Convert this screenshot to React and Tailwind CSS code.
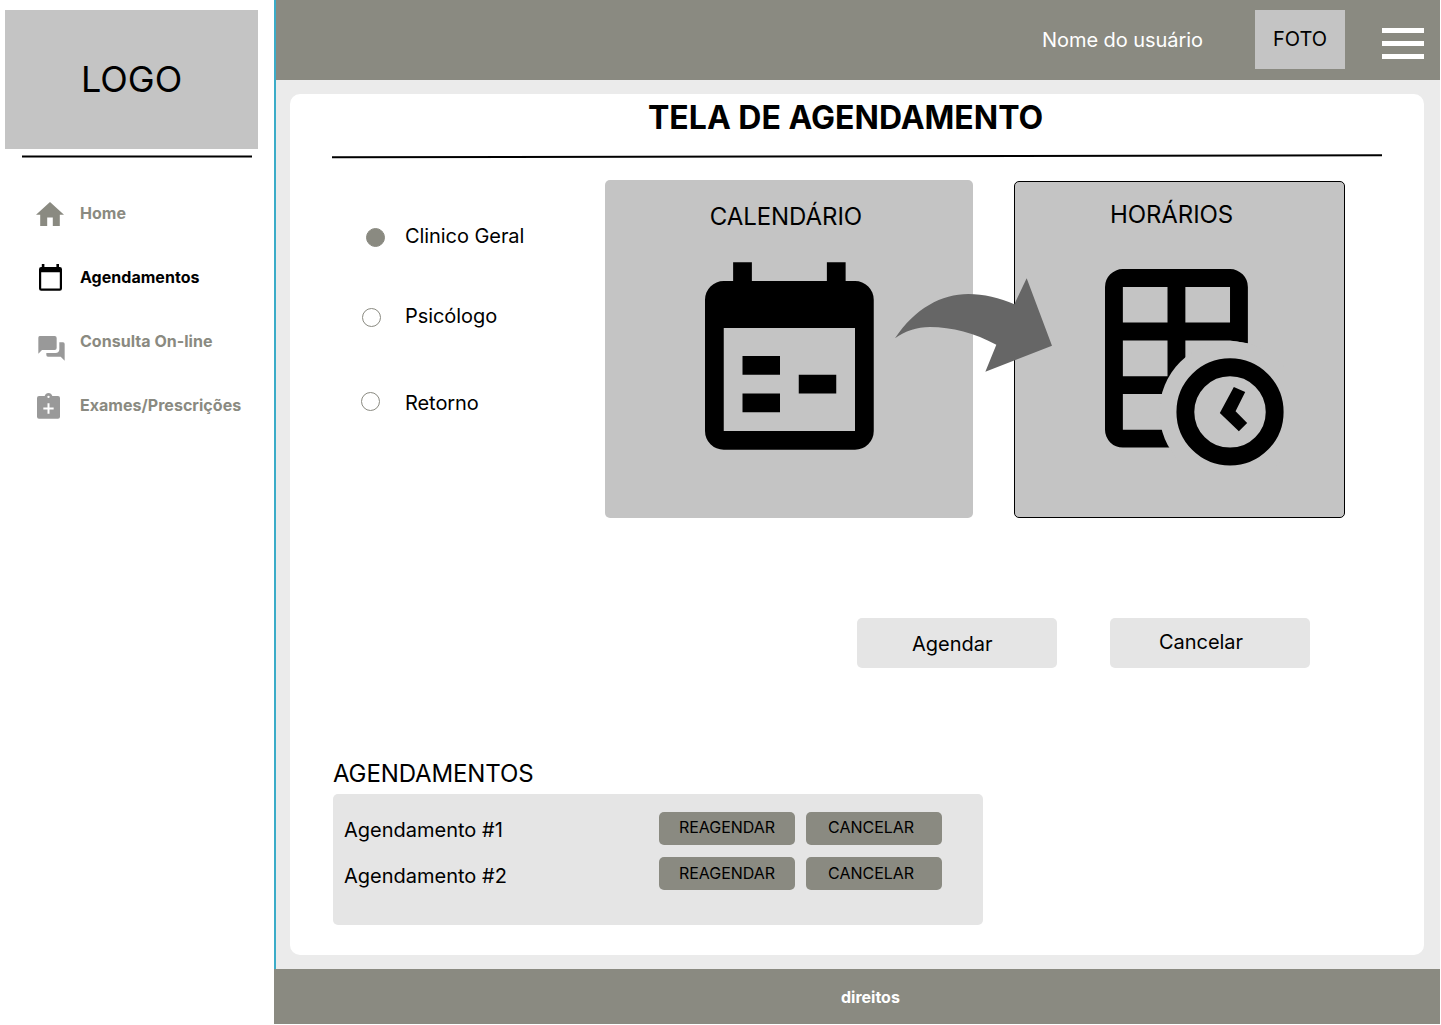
import React from "react";

const HomeIcon = () => (
  <svg width="28" height="24" viewBox="2 3 20 17" preserveAspectRatio="none" fill="#8a8a81">
    <path d="M10 20v-6h4v6h5v-8h3L12 3 2 12h3v8z" />
  </svg>
);

const CalendarIcon = () => (
  <svg width="23" height="27" viewBox="0 0 23 27" fill="#000">
    <path
      fillRule="evenodd"
      d="M2.8 0H5.4V3H17.4V0H20V3H20.8A2.2 2.2 0 0 1 23 5.2V24.6A2.2 2.2 0 0 1 20.8 26.8H2.2A2.2 2.2 0 0 1 0 24.6V5.2A2.2 2.2 0 0 1 2.200 3H2.8ZM2.200 8.200V24.500H20.800V8.200Z"
    />
  </svg>
);

const ForumIcon = () => (
  <svg width="27" height="25" viewBox="0 0 81 75" fill="#999">
    <path d="M5 0H50Q56 0 56 6V36Q56 42 50 42H12L1 53V5Q1 0 5 0Z" />
    <path d="M64 19H75Q80 19 80 24V74L68 62H30Q25 62 25 57V51H52Q64 51 64 40Z" />
  </svg>
);

const ClipboardIcon = () => (
  <svg width="23" height="26" viewBox="0 0 69 78" fill="#999">
    <path
      fillRule="evenodd"
      d="M6 9H23Q26 0 34.500 0Q43 0 46 9H63Q69 9 69 15V71Q69 77 63 77H6Q0 77 0 71V15Q0 9 6 9ZM34.500 8A3.500 3.500 0 1 0 34.500 15A3.500 3.500 0 1 0 34.500 8ZM31.500 31V43.500H19V49.500H31.500V62H37.500V49.500H50V43.500H37.500V31Z"
    />
  </svg>
);

const navItems = [
  { label: "Home", Icon: HomeIcon, box: "pl-[36px] pt-[9px]", color: "text-[#8a8a81]" },
  { label: "Agendamentos", Icon: CalendarIcon, box: "pl-[39px] pt-[7px]", color: "text-black" },
  { label: "Consulta On-line", Icon: ForumIcon, box: "pl-[38px] pt-[14.500px]", color: "text-[#8a8a81]" },
  { label: "Exames/Prescrições", Icon: ClipboardIcon, box: "pl-[36.500px] pt-[7.500px]", color: "text-[#8a8a81]" },
];

function Sidebar() {
  return (
    <aside className="w-[274px] shrink-0 bg-white">
      <div className="ml-[5px] mt-[10px] flex h-[139px] w-[253px] items-start bg-[#c4c4c4] pl-[76px] pt-[47px] text-[36px] leading-[44px]">
        LOGO
      </div>
      <svg className="ml-[22px] mt-[5px] block" width="230" height="4">
        <path d="M0 2.500H230" stroke="#000" strokeWidth="2" />
      </svg>
      <nav className="mt-[35px] flex flex-col">
        {navItems.map(({ label, Icon, box, color }) => (
          <a key={label} className={`flex h-16 items-start ${color}`}>
            <span className={`w-20 shrink-0 ${box}`}>
              <Icon />
            </span>
            <span className="whitespace-nowrap pt-[11px] text-base font-bold leading-[19px] tracking-[0.03px]">{label}</span>
          </a>
        ))}
      </nav>
    </aside>
  );
}

function Header() {
  return (
    <header className="flex h-20 items-start bg-[#8a8a81]">
      <span className="ml-[766px] mt-[28px] w-[213px] text-xl leading-6 tracking-[-0.06px] text-white">Nome do usuário</span>
      <div className="mt-[10px] h-[59px] w-[90px] bg-[#c4c4c4] pl-[18px] pt-[17px] text-xl leading-6">FOTO</div>
      <div className="ml-[37px] mt-[28px] flex w-[42px] flex-col gap-2">
        <span className="h-[5px] bg-white" />
        <span className="h-[5px] bg-white" />
        <span className="h-[5px] bg-white" />
      </div>
    </header>
  );
}

const options = [
  { label: "Clinico Geral", row: "h-20", dot: "ml-[4px] mt-[3.500px] bg-[#8a8a81] border-[#8a8a81]" },
  { label: "Psicólogo", row: "h-[87px]", dot: "ml-0 mt-[4px] border-[#8a8a81]" },
  { label: "Retorno", row: "h-6", dot: "ml-[-1px] mt-[1px] border-[#8a8a81]" },
];

function Specialties() {
  return (
    <div className="w-[243px] pt-[44px]">
      {options.map((o) => (
        <div key={o.label} className={`flex items-start ${o.row}`}>
          <span className="w-[43px] shrink-0">
            <span className={`block h-[19px] w-[19px] rounded-full border ${o.dot}`} />
          </span>
          <span className="text-xl leading-6 tracking-[-0.07px]">{o.label}</span>
        </div>
      ))}
    </div>
  );
}

function CalendarCard() {
  return (
    <div className="h-[338px] w-[368px] rounded-[5px] bg-[#c4c4c4] pl-[99.700px] pt-[22px]">
      <h2 className="pl-[5px] text-2xl leading-[29px] tracking-[-0.06px]">CALENDÁRIO</h2>
      <svg className="mt-[31px]" width="169.500" height="188" viewBox="3 1 18.080 20" fill="#000">
        <path
          fillRule="evenodd"
          d="M6 1H8V3H16V1H18V3H19A2 2 0 0 1 21 5V19A2 2 0 0 1 19 21H5A2 2 0 0 1 3 19V5A2 2 0 0 1 5 3H6ZM5 8V19H19V8Z"
        />
        <path d="M7 11h4v2H7zM13 13h4v2h-4zM7 15h4v2H7z" />
      </svg>
    </div>
  );
}

function HoursCard() {
  return (
    <div className="ml-[41px] mt-px h-[337px] w-[331px] rounded-[5px] border border-black bg-[#c4c4c4] pl-[90px] pt-[18px]">
      <h2 className="pl-[5px] text-2xl leading-[29px] tracking-[-0.1px]">HORÁRIOS</h2>
      <svg className="mt-[40px]" width="178.600" height="196.500" viewBox="2 2 20 22" fill="#000">
        <path
          fillRule="evenodd"
          d="M4 2H16A2 2 0 0 1 18 4V10.300L16 10H11V16H9V16H4V20H14V22H4A2 2 0 0 1 2 20V4A2 2 0 0 1 4 2ZM4 4V8H9V4ZM11 4V8H16V4ZM4 10V14H9V10Z"
        />
        <circle cx="16" cy="18" r="7.900" fill="#c4c4c4" />
        <circle cx="16" cy="18" r="5" fill="none" stroke="#000" strokeWidth="2" />
        <path d="M16.430 15.200 17.700 15.760 16.620 17.930 17.920 19.240 16.990 20.180 14.860 18.120Z" />
      </svg>
    </div>
  );
}

function Appointments() {
  return (
    <section className="ml-[43px] mt-[91px]">
      <h2 className="text-2xl leading-[29px] tracking-[-0.12px]">AGENDAMENTOS</h2>
      <div className="mt-[6px] flex h-[131px] w-[650px] flex-col gap-3 rounded-[5px] bg-[#e5e5e5] pl-[11px] pt-[18px]">
        {["1", "2"].map((n) => (
          <div key={n} className="flex h-[33px] items-start">
            <span className={`w-[315px] text-xl leading-6 ${n === "1" ? "pt-[6px]" : "pt-[7px]"}`}>
              Agendamento #{n}
            </span>
            <button
              className={`h-[33px] w-[136px] rounded-[5px] bg-[#8a8a81] pl-[20px] text-left text-base leading-[19px] tracking-[-0.05px] ${n === "1" ? "pb-[2px]" : "pb-0"}`}
            >
              REAGENDAR
            </button>
            <button
              className={`ml-[11px] h-[33px] w-[136px] rounded-[5px] bg-[#8a8a81] pl-[22px] text-left text-base leading-[19px] ${n === "1" ? "pb-[2px]" : "pb-0"}`}
            >
              CANCELAR
            </button>
          </div>
        ))}
      </div>
    </section>
  );
}

export default function App() {
  return (
    <div className="h-[1025px] w-[1441px] overflow-hidden bg-white font-['Inter',sans-serif] text-black">
      <div className="flex h-[1024px] w-[1440px]">
        <Sidebar />
        <div className="flex w-[1166px] flex-col">
          <div className="h-[969px] border-l-2 border-[#3bacc8] bg-[#ebebeb]">
            <Header />
            <main className="relative ml-[14px] mt-[14px] h-[861px] w-[1134px] rounded-[10px] bg-white pt-[4px]">
              <h1 className="pl-[358px] text-[32px] font-bold leading-[39px]">TELA DE AGENDAMENTO</h1>
              <svg className="ml-[42px] mt-[16px] block" width="1050" height="6">
                <path d="M0 4.200 1050 2.300" stroke="#000" strokeWidth="2" />
              </svg>
              <div className="ml-[72px] mt-[21px] flex h-[338px] items-start">
                <Specialties />
                <CalendarCard />
                <HoursCard />
              </div>
              <svg className="absolute left-[590px] top-[156px]" width="200" height="140" viewBox="0 0 600 420">
                <path
                  d="M45 265C105 175 185 132 265 132C310 132 360 143 403 163L440 85L516 287L316 365L349 284C285 250 215 231 150 231C110 231 75 243 45 265Z"
                  fill="#666"
                />
              </svg>
              <div className="ml-[567px] mt-[100px] flex gap-[53px] text-xl leading-6">
                <button className="h-[50px] w-[200px] rounded-[5px] bg-[#e5e5e5] pl-[55px] pt-[2px] text-left">Agendar</button>
                <button className="h-[50px] w-[200px] rounded-[5px] bg-[#e5e5e5] pb-[2px] pl-[49px] text-left tracking-[-0.04px]">Cancelar</button>
              </div>
              <Appointments />
            </main>
          </div>
          <footer className="h-[55px] bg-[#8a8a81] pl-[567px] pt-[19px] text-base font-bold leading-[19px] text-white">
            direitos
          </footer>
        </div>
      </div>
    </div>
  );
}
